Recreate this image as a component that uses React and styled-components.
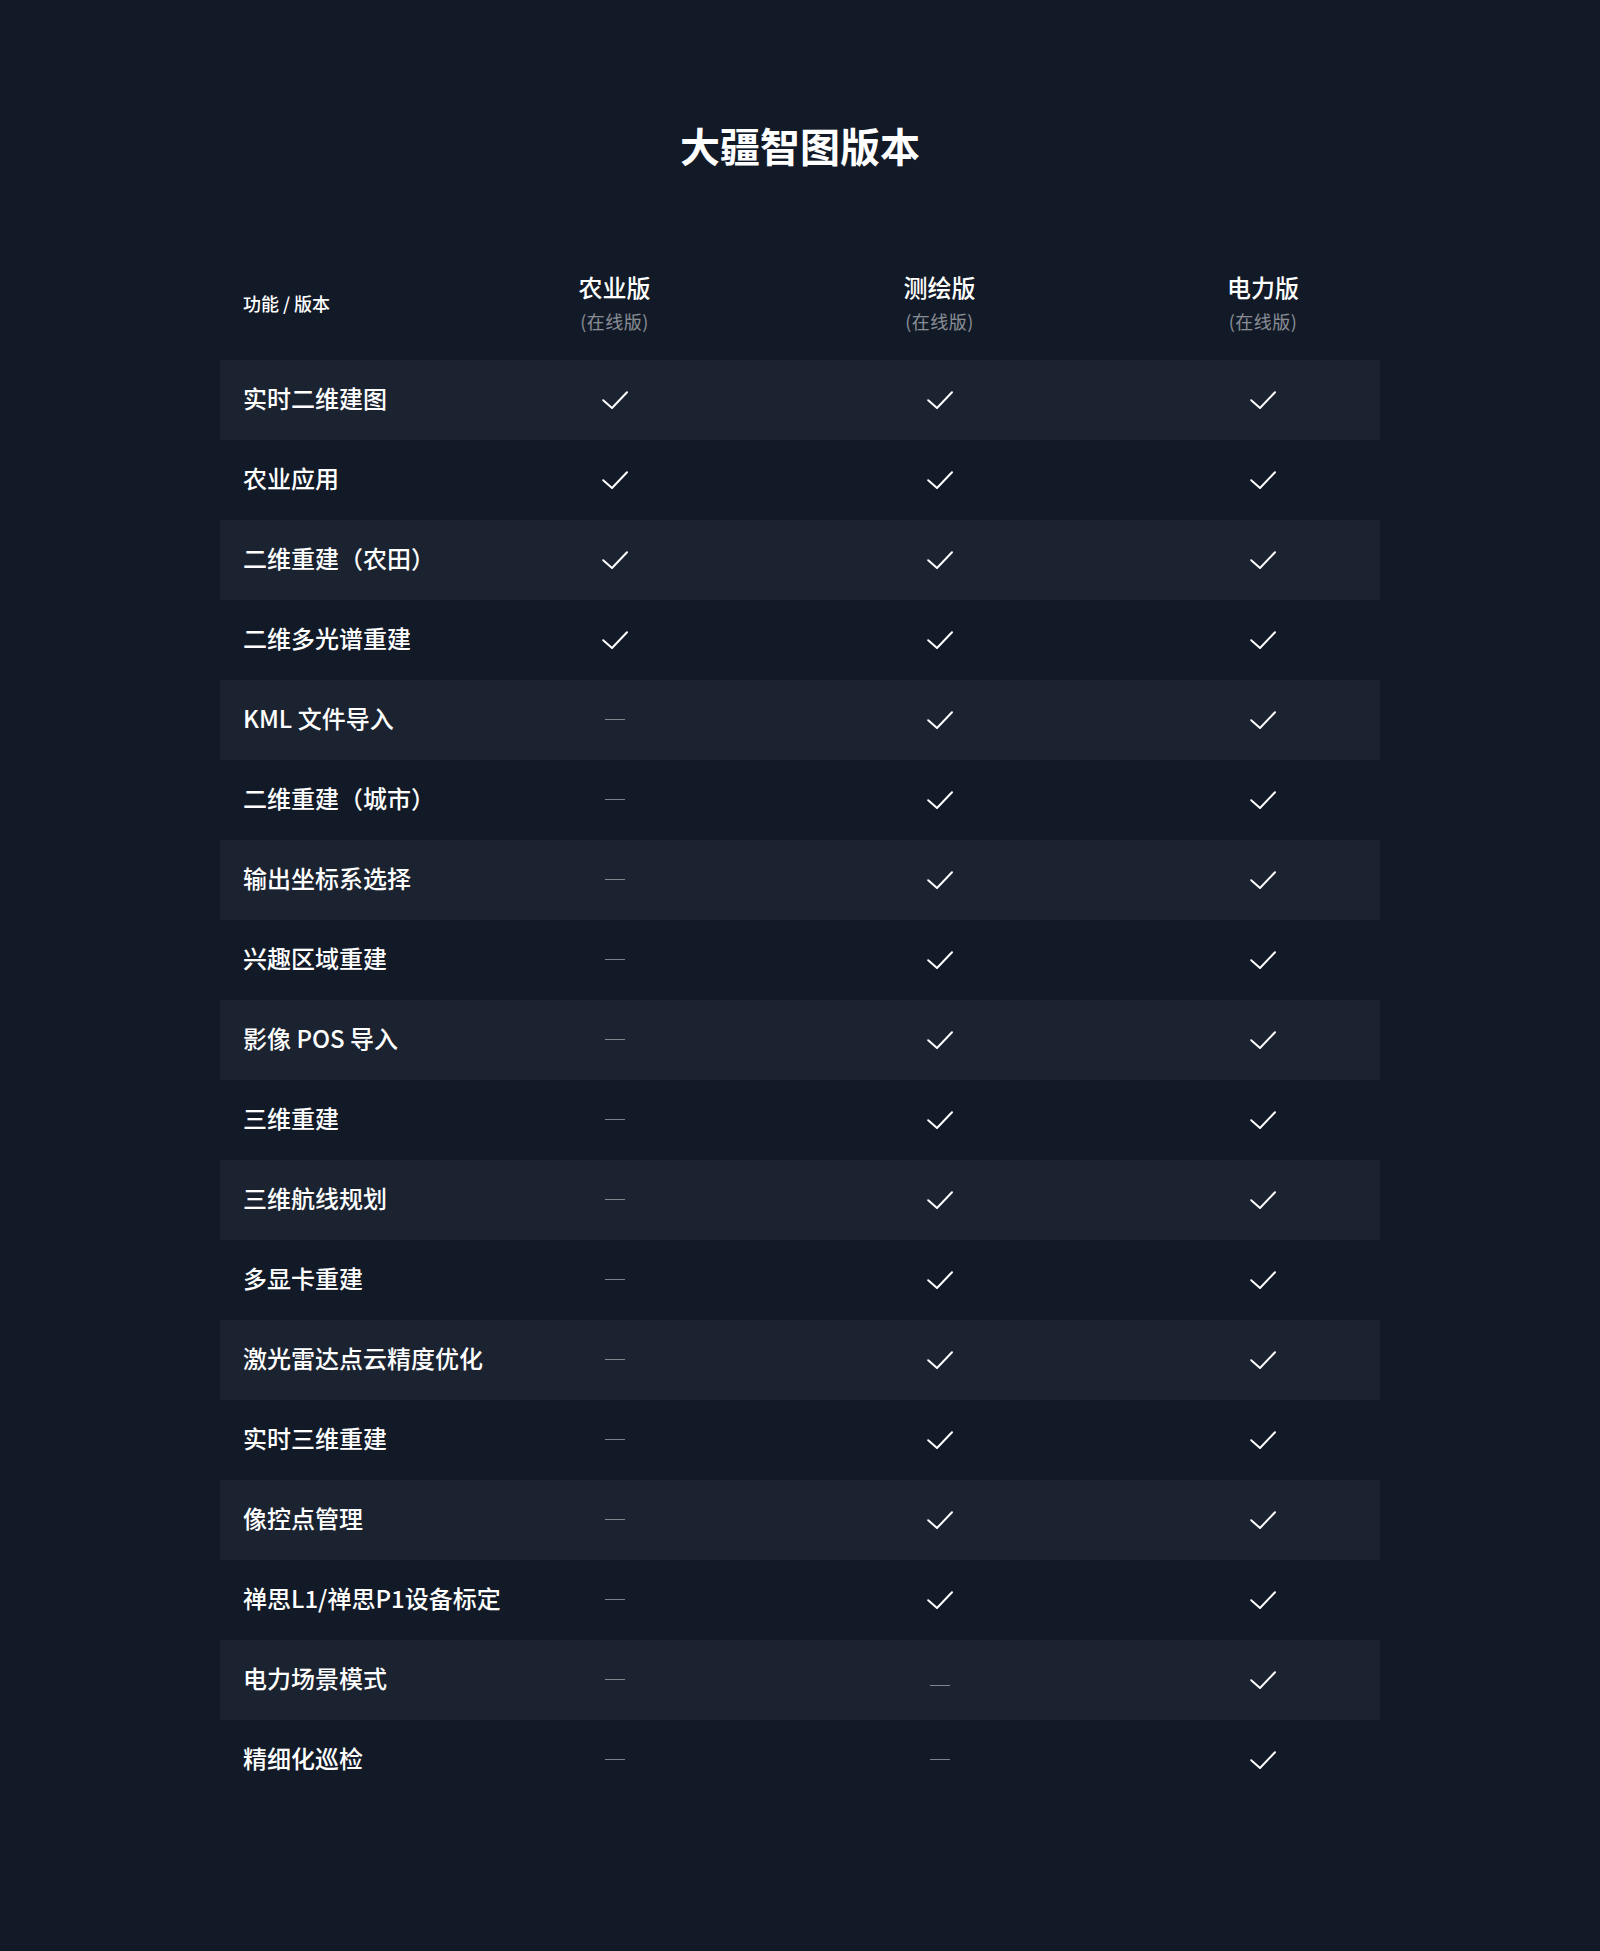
import styled, { createGlobalStyle } from "styled-components"

const GlobalStyle = createGlobalStyle`
  html, body {
    margin: 0;
    padding: 0;
    background: #121a28;
  }
  body {
    font-family: "Noto Sans CJK SC", "Noto Sans", sans-serif;
    color: #ffffff;
  }
`

const versions = ["农业版", "测绘版", "电力版"]

// y = 支持, n = 不支持, l = 不支持 (横线略低)
const features = [
  { name: "实时二维建图", marks: "yyy" },
  { name: "农业应用", marks: "yyy" },
  { name: "二维重建（农田）", marks: "yyy" },
  { name: "二维多光谱重建", marks: "yyy" },
  { name: "KML 文件导入", marks: "nyy" },
  { name: "二维重建（城市）", marks: "nyy" },
  { name: "输出坐标系选择", marks: "nyy" },
  { name: "兴趣区域重建", marks: "nyy" },
  { name: "影像 POS 导入", marks: "nyy" },
  { name: "三维重建", marks: "nyy" },
  { name: "三维航线规划", marks: "nyy" },
  { name: "多显卡重建", marks: "nyy" },
  { name: "激光雷达点云精度优化", marks: "nyy" },
  { name: "实时三维重建", marks: "nyy" },
  { name: "像控点管理", marks: "nyy" },
  { name: "禅思L1/禅思P1设备标定", marks: "nyy" },
  { name: "电力场景模式", marks: "nly" },
  { name: "精细化巡检", marks: "nny" },
]

function Check() {
  return (
    <CheckSvg viewBox="0 0 26 18" fill="none">
      <path d="M1.2 9.2 L10 17 L25 1.2" stroke="#ffffff" strokeWidth="2" strokeLinecap="round" strokeLinejoin="round" />
    </CheckSvg>
  )
}

function Mark({ value }) {
  if (value === "y") return <Check />
  return <Dash $low={value === "l"} />
}

export default function App() {
  return (
    <Page>
      <GlobalStyle />
      <Title>大疆智图版本</Title>
      <Table>
        <HeadRow>
          <HeadLabel>功能 / 版本</HeadLabel>
          {versions.map((v, i) => (
            <MarkCell key={v} $last={i === versions.length - 1}>
              <VersionBox>
                <VersionName>{v}</VersionName>
                <VersionNote>(在线版)</VersionNote>
              </VersionBox>
            </MarkCell>
          ))}
        </HeadRow>
        {features.map((f, idx) => (
          <Row key={f.name} $shade={idx % 2 === 0}>
            <Label>{f.name}</Label>
            {f.marks.split("").map((m, i) => (
              <MarkCell key={i} $last={i === 2}>
                <Mark value={m} />
              </MarkCell>
            ))}
          </Row>
        ))}
      </Table>
    </Page>
  )
}

const Page = styled.main`
  display: flex;
  flex-direction: column;
  align-items: center;
  padding: 117px 0 151px;
  background: #121a28;
`
const Title = styled.h1`
  margin: 0 0 79px;
  font-size: 40px;
  line-height: 56px;
  font-weight: 700;
  color: #ffffff;
  letter-spacing: 0;
`
const Table = styled.section`
  width: 1160px;
  display: flex;
  flex-direction: column;
`
const HeadRow = styled.div`
  display: grid;
  grid-template-columns: 232px 325px 325px 1fr;
  align-items: center;
  height: 108px;
  padding-bottom: 6px;
  box-sizing: border-box;
`
const Row = styled.div`
  display: grid;
  grid-template-columns: 232px 325px 325px 1fr;
  align-items: center;
  height: 80px;
  background: ${p => (p.$shade ? "#1b2331" : "transparent")};
`
const HeadLabel = styled.div`
  padding-left: 23px;
  font-size: 18px;
  font-weight: 500;
  color: #ffffff;
  white-space: nowrap;
`
const Label = styled.div`
  padding-left: 23px;
  padding-bottom: 5px;
  font-size: 24px;
  line-height: 32px;
  font-weight: 500;
  color: #ffffff;
  white-space: nowrap;
`
const MarkCell = styled.div`
  display: flex;
  justify-content: center;
  align-items: center;
  padding-left: ${p => (p.$last ? "44px" : "0")};
`
const VersionBox = styled.div`
  display: flex;
  flex-direction: column;
  align-items: center;
`
const VersionName = styled.div`
  font-size: 24px;
  line-height: 32px;
  font-weight: 500;
  color: #ffffff;
`
const VersionNote = styled.div`
  margin-top: 4px;
  font-size: 18px;
  line-height: 28px;
  letter-spacing: 0.5px;
  color: rgba(255, 255, 255, 0.5);
`
const CheckSvg = styled.svg`
  width: 26px;
  height: 18px;
  display: block;
`
const Dash = styled.span`
  display: block;
  width: 20px;
  height: 1px;
  margin-top: ${p => (p.$low ? "10px" : "-2px")};
  background: rgba(255, 255, 255, 0.45);
`
